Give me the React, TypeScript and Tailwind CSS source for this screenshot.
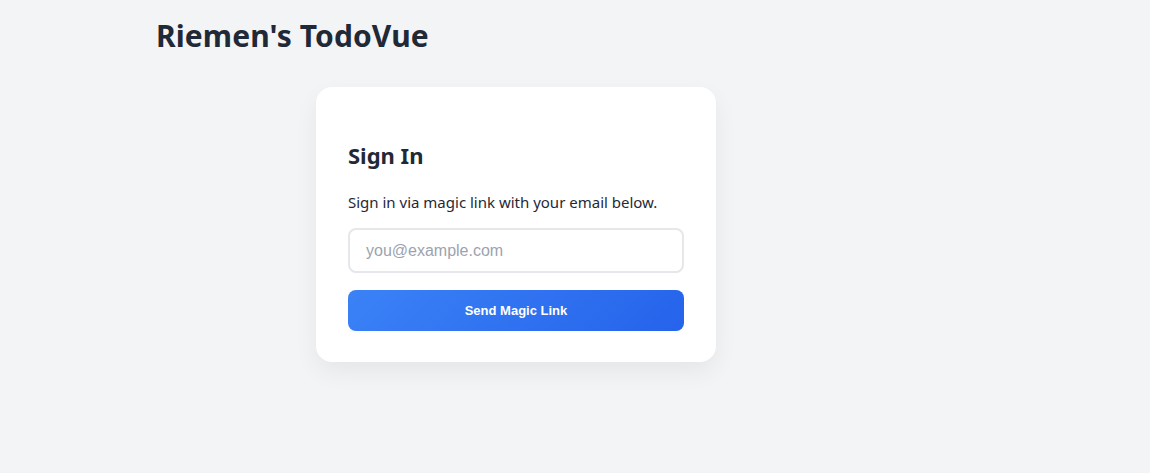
export default function App() {
  return (
    <div className="min-h-[473px] bg-[#f3f4f6] text-[#1f2937]" style={{ fontFamily: '"Noto Sans", sans-serif' }}>
      <div className="w-[720px] ml-[156px] pt-[14px]">
        <h1 className="text-[30px] font-bold leading-[44px] tracking-[0.1px] text-[#1f2937]">Riemen's TodoVue</h1>
        <div className="mt-[29px] flex justify-center">
          <div className="w-[400px] bg-white rounded-[16px] shadow-[0_10px_25px_rgba(0,0,0,0.06)] px-[32px] pt-[52px] pb-[31px]">
            <h2 className="text-[22px] font-bold leading-[32px] text-[#1f2937]">Sign In</h2>
            <p className="mt-[19px] text-[15px] leading-[24px] text-[#1f2937]">Sign in via magic link with your email below.</p>
            <input
              type="email"
              placeholder="you@example.com"
              className="mt-[14px] block w-full h-[45px] rounded-[8px] border-2 border-[#e5e7eb] px-[16px] text-[16px] placeholder:text-[#9ca3af] outline-none"
              style={{ fontFamily: '"Liberation Sans", Arial, sans-serif' }}
            />
            <button
              className="mt-[17px] block w-full h-[41px] rounded-[8px] bg-[linear-gradient(135deg,#3b82f6,#2563eb)] text-white text-[13px] font-bold"
              style={{ fontFamily: '"Liberation Sans", Arial, sans-serif' }}
            >
              Send Magic Link
            </button>
          </div>
        </div>
      </div>
    </div>
  );
}
